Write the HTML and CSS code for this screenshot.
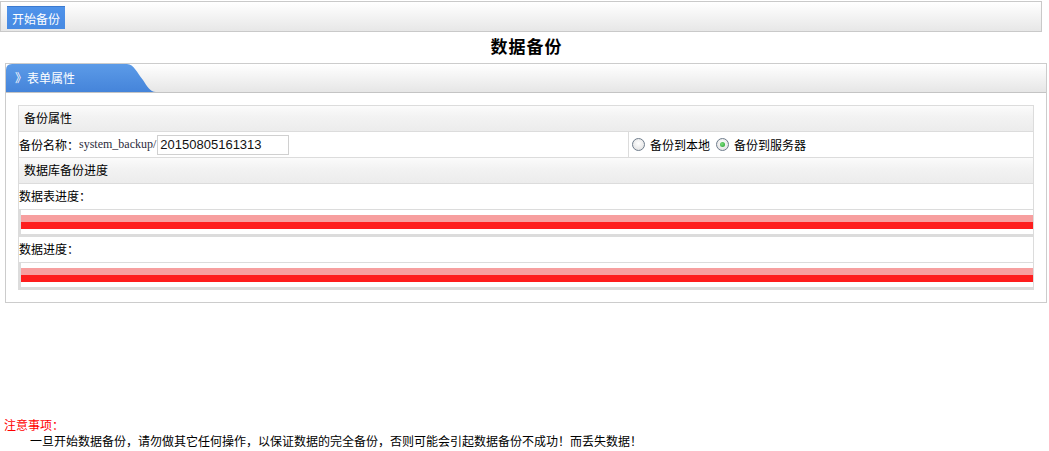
FILE: index.html
```html
<!DOCTYPE html>
<html>
<head>
<meta charset="utf-8">
<link rel="stylesheet" href="styles.css">
</head>
<body>
<div class="toolbar">
  <button class="btn">开始备份</button>
</div>
<div class="title">数据备份</div>
<div class="panel">
  <div class="panel-head">
    <div class="tab">》表单属性</div>
  </div>
  <div class="panel-body">
    <div class="grid">
      <div class="row head">备份属性</div>
      <div class="row name-row">
        <div class="name-cell">
          <span class="lbl">备份名称：</span><span class="path">system_backup/</span><input class="inp" type="text" value="20150805161313">
        </div>
        <div class="radio-cell">
          <label class="opt"><input type="radio" name="t" class="rad">备份到本地</label>
          <label class="opt"><input type="radio" name="t" class="rad" checked>备份到服务器</label>
        </div>
      </div>
      <div class="row head">数据库备份进度</div>
      <div class="row plain">数据表进度：</div>
      <div class="row prog"><div class="bar"><div class="bar-light"></div><div class="bar-dark"></div></div></div>
      <div class="row plain">数据进度：</div>
      <div class="row prog last"><div class="bar"><div class="bar-light"></div><div class="bar-dark"></div></div></div>
    </div>
  </div>
</div>
<div class="notes">
  <div class="note-title">注意事项：</div>
  <div class="note-text">一旦开始数据备份，请勿做其它任何操作，以保证数据的完全备份，否则可能会引起数据备份不成功！而丢失数据！</div>
</div>
</body>
</html>
```
FILE: styles.css
```css
* { box-sizing: border-box; }
body {
  margin: 0;
  padding-top: 1px;
  font-family: "Noto Sans CJK SC", "Liberation Sans", sans-serif;
  font-size: 12px;
  color: #000;
  background: #fff;
}
.toolbar {
  width: 1042px;
  height: 31px;
  border: 1px solid #c9c9c9;
  background: linear-gradient(#ffffff, #e7e7e7);
  padding: 4px 0 0 6px;
}
.btn {
  display: block;
  width: 58px;
  height: 23px;
  margin: 0;
  padding: 0;
  border: 0;
  border-top: 1px solid #3b7ad0;
  background: linear-gradient(#4f93ea, #4689e2);
  color: #fff;
  font-family: "Noto Sans CJK SC", sans-serif;
  font-size: 12px;
  line-height: 21px;
}
.title {
  width: 1049px;
  height: 31px;
  text-align: center;
  font-size: 17px;
  font-weight: bold;
  line-height: 27px;
  letter-spacing: 1px;
  padding-left: 4px;
}
.panel {
  margin-left: 5px;
  width: 1042px;
  border: 1px solid #cccccc;
}
.panel-head {
  height: 29px;
  background: linear-gradient(#ffffff, #e6e6e6);
  border-bottom: 1px solid #c4c4c4;
  display: flex;
}
.tab {
  width: 150px;
  height: 28px;
  background: linear-gradient(#5c9be8, #4584da);
  color: #fff;
  font-size: 12px;
  line-height: 27px;
  padding-left: 9px;
  clip-path: path("M0,6 Q0,0 6,0 L121,0 C128,0 131,9 137,16 C141,22 144,28 150,28 L0,28 Z");
}
.panel-body {
  padding: 12px;
}
.grid {
  border: 1px solid #dcdcdc;
  border-bottom: 0;
  display: flex;
  flex-direction: column;
}
.row {
  height: 26px;
  border-bottom: 1px solid #dcdcdc;
}
.head {
  background: linear-gradient(#fbfbfb 0%, #f3f3f3 40%, #ececec 100%);
  line-height: 24px;
  padding-left: 5px;
}
.plain {
  line-height: 24px;
  padding-left: 0;
}
.name-row {
  display: flex;
  align-items: center;
}
.name-cell {
  width: 610px;
  height: 100%;
  display: flex;
  align-items: center;
  border-right: 1px solid #dcdcdc;
}
.lbl { white-space: nowrap; }
.path {
  font-family: "Liberation Serif", serif;
  font-size: 12px;
  color: #2b2b3b;
}
.inp {
  width: 132px;
  height: 20px;
  margin: 0 0 0 1px;
  border: 1px solid #d0d0d0;
  padding: 0 2px;
  font-family: "Liberation Sans", sans-serif;
  font-size: 13px;
  color: #111;
  outline: none;
}
.radio-cell {
  display: flex;
  align-items: center;
  padding-left: 3px;
  gap: 6px;
}
.opt {
  display: flex;
  align-items: center;
  gap: 5px;
}
.rad {
  appearance: none;
  -webkit-appearance: none;
  width: 13px;
  height: 13px;
  margin: 0;
  border-radius: 50%;
  border: 1px solid #6e7c8c;
  background: radial-gradient(circle at 50% 40%, #ffffff, #dcdcdc);
  position: relative;
}
.rad:checked::after {
  content: "";
  position: absolute;
  left: 3px;
  top: 3px;
  width: 5px;
  height: 5px;
  border-radius: 50%;
  background: radial-gradient(circle at 40% 40%, #7ee07e, #1f9a2a);
}
.prog {
  height: 27px;
  border-left: 3px solid #dcdcdc;
  border-bottom: 3px solid #dcdcdc;
  margin-left: -1px;
  padding-top: 5px;
}
.bar-light {
  height: 7px;
  background: #f79f9f;
}
.bar-dark {
  height: 7px;
  background: #fe1d1d;
}
.notes {
  margin-top: 114px;
  padding-left: 4px;
  line-height: 16px;
}
.note-title {
  color: #ff0000;
}
.note-text {
  padding-left: 26px;
}
```
